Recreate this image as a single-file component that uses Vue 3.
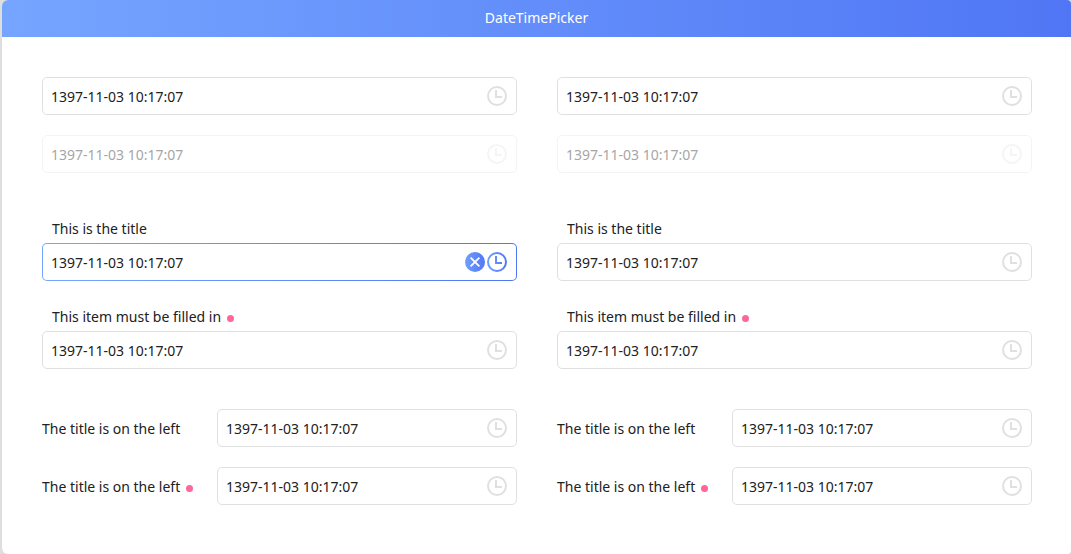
<script setup>
import { reactive } from 'vue'

const value = '1397-11-03 10:17:07'

const groupsFor = (column, active) => [
  {
    id: `${column}-plain`,
    fields: [
      { id: `${column}-basic`, value },
      { id: `${column}-disabled`, value, disabled: true },
    ],
  },
  {
    id: `${column}-top`,
    fields: [
      { id: `${column}-title`, value, title: 'This is the title', active },
      { id: `${column}-needed`, value, title: 'This item must be filled in', required: true },
    ],
  },
  {
    id: `${column}-side`,
    fields: [
      { id: `${column}-left`, value, title: 'The title is on the left', side: true },
      { id: `${column}-left-needed`, value, title: 'The title is on the left', side: true, required: true },
    ],
  },
]

const columns = reactive([
  { id: 'a', groups: groupsFor('a', true) },
  { id: 'b', groups: groupsFor('b', false) },
])
</script>

<template>
  <main class="card">
    <header class="card-header">
      <h1>DateTimePicker</h1>
    </header>
    <div class="card-body">
      <div v-for="column in columns" :key="column.id" class="column">
        <div v-for="group in column.groups" :key="group.id" class="group">
          <div
            v-for="field in group.fields"
            :key="field.id"
            class="field"
            :class="{ side: field.side, disabled: field.disabled, active: field.active }"
          >
            <label v-if="field.title" :for="field.id" class="title">
              <span>{{ field.title }}</span>
              <i v-if="field.required" class="dot"></i>
            </label>
            <div class="box">
              <input
                :id="field.id"
                v-model="field.value"
                type="text"
                :disabled="field.disabled"
                :required="field.required"
                :aria-label="field.title ? undefined : 'Date and time'"
              />
              <button v-if="field.active" type="button" class="icon" aria-label="Clear" @click="field.value = ''">
                <svg viewBox="0 0 20 20" width="20" height="20" aria-hidden="true">
                  <defs>
                    <linearGradient id="clear-fill" x1="0" x2="1" y1="0" y2="0">
                      <stop offset="0" stop-color="#6f9fff" />
                      <stop offset="1" stop-color="#5276f5" />
                    </linearGradient>
                  </defs>
                  <circle cx="10" cy="10" r="10" fill="url(#clear-fill)" />
                  <path d="M5.6 5.6l8.8 8.8M14.4 5.6l-8.8 8.8" fill="none" stroke="#fff" stroke-width="1.8" />
                </svg>
              </button>
              <button type="button" class="icon" :disabled="field.disabled" aria-label="Choose time">
                <svg viewBox="0 0 20 20" width="20" height="20" aria-hidden="true">
                  <defs v-if="field.active">
                    <linearGradient id="clock-line" gradientUnits="userSpaceOnUse" x1="0" x2="20" y1="0" y2="0">
                      <stop offset="0" stop-color="#6f9fff" />
                      <stop offset="1" stop-color="#5276f5" />
                    </linearGradient>
                  </defs>
                  <g fill="none" :stroke="field.active ? 'url(#clock-line)' : '#e0e0e0'" stroke-width="2">
                    <circle cx="10" cy="10" r="9" />
                    <path d="M9 4v7h6" />
                  </g>
                </svg>
              </button>
            </div>
          </div>
        </div>
      </div>
    </div>
  </main>
</template>

<style>
body {
  background: #dedede;
}
</style>

<style scoped>
.card {
  box-sizing: border-box;
  min-height: 100vh;
  margin-left: 2px;
  overflow: hidden;
  border-radius: 6px 4px 4px 6px;
  background: #fff;
  color: #212121;
  font: 14px/20px "Segoe UI", "Noto Sans", sans-serif;
}

.card-header {
  box-sizing: border-box;
  display: flex;
  align-items: center;
  justify-content: center;
  height: 37px;
  padding-bottom: 2px;
  background: linear-gradient(to right, #75a5ff, #5076f5);
  color: #fff;
}

h1 {
  margin: 0;
  font-size: 14px;
  font-weight: 400;
}

.card-body {
  display: grid;
  grid-template-columns: 1fr 1fr;
  gap: 40px;
  padding: 40px 39px 40px 40px;
}

.column {
  display: flex;
  flex-direction: column;
  gap: 40px;
  min-width: 0;
}

.group {
  display: flex;
  flex-direction: column;
  gap: 20px;
}

.title {
  box-sizing: border-box;
  display: flex;
  align-items: center;
  gap: 6px;
  height: 30px;
  padding: 2px 0 0 10px;
}

.dot {
  width: 7px;
  height: 7px;
  margin-top: 3px;
  border-radius: 50%;
  background: #ff6699;
}

.box {
  box-sizing: border-box;
  display: flex;
  align-items: center;
  gap: 2px;
  height: 38px;
  padding: 0 9px 0 8px;
  border: 1px solid #e0e0e0;
  border-radius: 5px;
  background: #fff;
}

.side {
  display: grid;
  grid-template-columns: 175px 1fr;
  align-items: center;
}

.side .title {
  padding-left: 0;
}

.disabled .box {
  border-color: #f4f4f4;
}

.disabled input {
  color: #a6a6a6;
}

.disabled .icon {
  opacity: 0.3;
}

.active .box {
  border-color: transparent;
  background:
    linear-gradient(#fff, #fff) padding-box,
    linear-gradient(to right, #75a5ff, #5076f5) border-box;
}

input {
  flex: 1;
  min-width: 0;
  height: 20px;
  padding: 2px 0 0;
  border: 0;
  outline: 0;
  background: none;
  color: inherit;
  font: inherit;
}

.icon {
  display: flex;
  padding: 0;
  border: 0;
  background: none;
}
</style>
